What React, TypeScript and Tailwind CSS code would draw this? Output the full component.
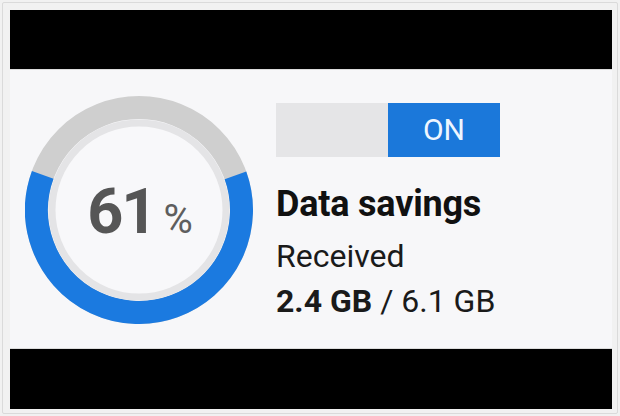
const RING = 102.5
const CIRC = 2 * Math.PI * RING

function SavingsRing({ percent }: { percent: number }) {
  const sweep = percent / 100
  // blue arc is centred on the bottom of the ring
  const start = 90 - sweep * 180
  return (
    <div className="relative w-[228px] h-[228px] shrink-0">
      <svg width="228" height="228" viewBox="0 0 228 228" className="absolute inset-0">
        <circle cx="114" cy="114" r={RING} fill="none" stroke="#cfcfcf" strokeWidth="23" />
        <circle
          cx="114" cy="114" r={RING} fill="none" stroke="#1b7ae0" strokeWidth="23"
          strokeDasharray={`${sweep * CIRC} ${CIRC}`}
          transform={`rotate(${start} 114 114)`}
        />
        <circle cx="114" cy="114" r="87" fill="#f8f8fa" stroke="#e4e4e6" strokeWidth="7" />
      </svg>
      <div className="absolute inset-0 flex items-center justify-center">
        <div className="flex items-baseline text-[#565656] leading-none ml-[2px] translate-y-[1px]" style={{ fontFamily: 'Roboto, "Liberation Sans", sans-serif' }}>
          <span className="text-[63px] font-bold tracking-[-2px]">{percent}</span>
          <span className="text-[40px] font-normal ml-[8px] text-[#5e5e5e]">%</span>
        </div>
      </div>
    </div>
  )
}

export default function App() {
  return (
    <div className="w-[620px] h-[416px] bg-[#f1f1f1] p-[2px]" style={{ fontFamily: 'Roboto, "Liberation Sans", sans-serif' }}>
      <div className="h-full border border-[#dadada] rounded-[2px] pt-[7px] pl-[7px] pr-[5px] pb-[4px] flex flex-col">
        <div className="h-[59px] bg-black" />
        <div className="h-[280px] bg-[#f7f7f9] border-y border-[#dcdcdc] flex items-start pl-[15px] pt-[26px]">
          <SavingsRing percent={61} />
          <div className="ml-[23px] mt-[7px] flex flex-col">
            <div className="flex w-[224px] h-[54px]">
              <div className="w-[112px] bg-[#e5e5e7]" />
              <div className="w-[112px] bg-[#1b78da] flex items-center justify-center text-[30px] text-[#eef6ff] leading-none">ON</div>
            </div>
            <p className="mt-[25px] text-[36px] font-bold text-[#111] leading-[44px] tracking-[-0.2px]">Data savings</p>
            <p className="mt-[8px] text-[32px] text-[#1a1a1a] leading-[45px]">Received</p>
            <p className="text-[32px] text-[#1a1a1a] leading-[45px]">
              <span className="font-bold">2.4 GB</span> / 6.1 GB
            </p>
          </div>
        </div>
        <div className="flex-1 bg-black" />
      </div>
    </div>
  )
}
